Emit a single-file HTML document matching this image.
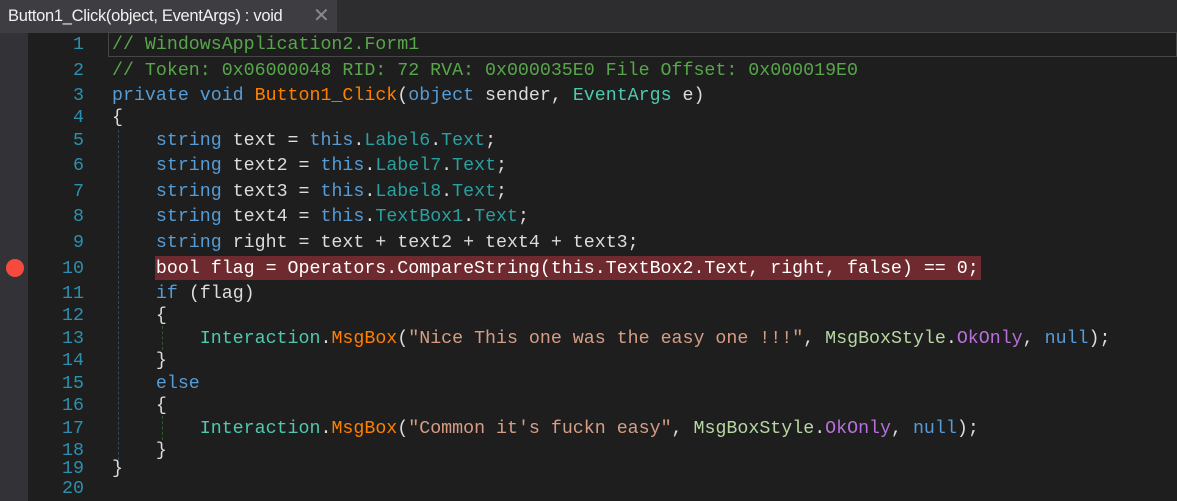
<!DOCTYPE html>
<html><head><style>
body{margin:0;width:1177px;height:501px;background:#1e1e1e;overflow:hidden;position:relative;font-family:"Liberation Mono",monospace}
.tabbar{position:absolute;left:0;top:0;width:1177px;height:33px;background:#2d2d30}
.tab{position:absolute;left:0;top:0;width:337px;height:33px;background:#3e3e42;color:#f1f1f1;font:16.5px "Liberation Sans",sans-serif;line-height:33px;padding-left:8px;box-sizing:border-box;letter-spacing:-0.3px}
.tab span{position:absolute;left:313px;top:0;color:#8a8a8a;font-size:20px}
.strip{position:absolute;left:0;top:33px;width:28px;height:468px;background:#333337}
.ln{position:absolute;width:84px;left:0;text-align:right;color:#2b91af;font-size:18.3px}
.l{position:absolute;left:112px;color:#dcdcdc;font-size:18.3px;white-space:pre}
.c{color:#57a64a}.k{color:#569cd6}.m{color:#ff8000}.t{color:#4ec9b0}.p{color:#2aa1a1}.s{color:#d69d85}.e{color:#b8d7a3}.o{color:#b86fdc}
.g{position:absolute;border-left:1px dashed #2c4a66;width:0}
</style></head><body>
<div class="tabbar"><div class="tab">Button1_Click(object, EventArgs) : void<span>✕</span></div></div>
<div class="strip"></div>
<div style="position:absolute;left:108px;top:32px;width:1069px;height:25px;border:1px solid #464646;box-sizing:border-box"></div>
<div style="position:absolute;left:155px;top:256px;width:826px;height:24px;background:#6e2a2e"></div>
<div style="position:absolute;left:6px;top:259px;width:18px;height:18px;border-radius:50%;background:#f64a3f"></div>
<div class="g" style="left:118px;top:130px;height:340px"></div>
<div class="g" style="left:162px;top:326px;height:24px;border-color:#2e5a2e"></div>
<div class="g" style="left:162px;top:416px;height:24px;border-color:#2e5a2e"></div>
<div id="c"></div>
<script>
var Y=[44,70,95,117,140,165,191,216,242,268,293,315,338,360,383,405,428,450,468,488];
var L=[
'<span class="c">// WindowsApplication2.Form1</span>',
'<span class="c">// Token: 0x06000048 RID: 72 RVA: 0x000035E0 File Offset: 0x000019E0</span>',
'<span class="k">private void</span> <span class="m">Button1_Click</span>(<span class="k">object</span> sender, <span class="t">EventArgs</span> e)',
'{',
'    <span class="k">string</span> text = <span class="k">this</span>.<span class="p">Label6</span>.<span class="p">Text</span>;',
'    <span class="k">string</span> text2 = <span class="k">this</span>.<span class="p">Label7</span>.<span class="p">Text</span>;',
'    <span class="k">string</span> text3 = <span class="k">this</span>.<span class="p">Label8</span>.<span class="p">Text</span>;',
'    <span class="k">string</span> text4 = <span class="k">this</span>.<span class="p">TextBox1</span>.<span class="p">Text</span>;',
'    <span class="k">string</span> right = text + text2 + text4 + text3;',
'    <span style="color:#fff">bool flag = Operators.CompareString(this.TextBox2.Text, right, false) == 0;</span>',
'    <span class="k">if</span> (flag)',
'    {',
'        <span class="t">Interaction</span>.<span class="m">MsgBox</span>(<span class="s">"Nice This one was the easy one !!!"</span>, <span class="e">MsgBoxStyle</span>.<span class="o">OkOnly</span>, <span class="k">null</span>);',
'    }',
'    <span class="k">else</span>',
'    {',
'        <span class="t">Interaction</span>.<span class="m">MsgBox</span>(<span class="s">"Common it\'s fuckn easy"</span>, <span class="e">MsgBoxStyle</span>.<span class="o">OkOnly</span>, <span class="k">null</span>);',
'    }',
'}',
''];
var h='';
for(var i=0;i<20;i++){var t=Y[i]-9;
h+='<div class="ln" style="top:'+t+'px">'+(i+1)+'</div><div class="l" style="top:'+t+'px">'+L[i]+'</div>';}
document.getElementById('c').innerHTML=h;
</script>
</body></html>
